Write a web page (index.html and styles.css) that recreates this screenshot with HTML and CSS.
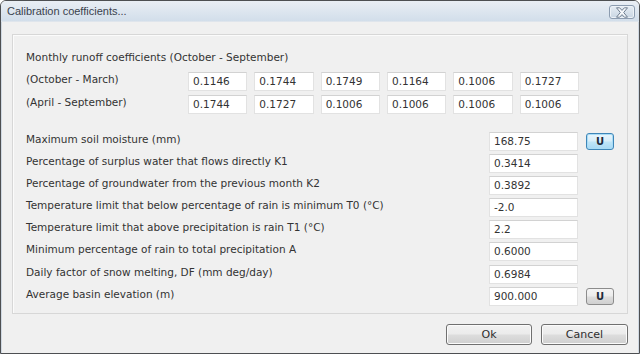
FILE: index.html
```html
<!DOCTYPE html>
<html>
<head>
<meta charset="utf-8">
<link rel="stylesheet" href="styles.css">
</head>
<body>
<div class="window">
  <div class="titlebar">
    <span class="title">Calibration coefficients...</span>
    <span class="close">
      <svg width="16" height="11" viewBox="0 0 16 11">
        <path d="M2.5 0.8 L5.6 0.8 L8 3.4 L10.4 0.8 L13.5 0.8 L9.7 5.5 L13.5 10.2 L10.4 10.2 L8 7.6 L5.6 10.2 L2.5 10.2 L6.3 5.5 Z" fill="#f6f8fb" stroke="#6f7e90" stroke-width="1" stroke-linejoin="round"/>
      </svg>
    </span>
  </div>
  <div class="content">
    <div class="group">
      <div class="heading">Monthly runoff coefficients (October - September)</div>
      <div class="monthly">
        <span class="label">(October - March)</span>
        <span class="field">0.1146</span>
        <span class="field">0.1744</span>
        <span class="field">0.1749</span>
        <span class="field">0.1164</span>
        <span class="field">0.1006</span>
        <span class="field">0.1727</span>
        <span class="label">(April - September)</span>
        <span class="field">0.1744</span>
        <span class="field">0.1727</span>
        <span class="field">0.1006</span>
        <span class="field">0.1006</span>
        <span class="field">0.1006</span>
        <span class="field">0.1006</span>
      </div>
      <div class="params">
        <span class="label">Maximum soil moisture (mm)</span>
        <span class="field">168.75</span>
        <span class="ubtn focused">U</span>
        <span class="label">Percentage of surplus water that flows directly K1</span>
        <span class="field">0.3414</span>
        <span></span>
        <span class="label">Percentage of groundwater from the previous month K2</span>
        <span class="field">0.3892</span>
        <span></span>
        <span class="label">Temperature limit that below percentage of rain is minimum T0 (°C)</span>
        <span class="field">-2.0</span>
        <span></span>
        <span class="label">Temperature limit that above precipitation is rain T1 (°C)</span>
        <span class="field">2.2</span>
        <span></span>
        <span class="label">Minimum percentage of rain to total precipitation A</span>
        <span class="field">0.6000</span>
        <span></span>
        <span class="label">Daily factor of snow melting, DF (mm deg/day)</span>
        <span class="field">0.6984</span>
        <span></span>
        <span class="label">Average basin elevation (m)</span>
        <span class="field">900.000</span>
        <span class="ubtn">U</span>
      </div>
    </div>
    <div class="actions">
      <span class="btn">Ok</span>
      <span class="btn">Cancel</span>
    </div>
  </div>
</div>
</body>
</html>
```
FILE: styles.css
```css
* { box-sizing: border-box; }
html, body {
  margin: 0;
  padding: 0;
  width: 640px;
  height: 354px;
  overflow: hidden;
  background: #ffffff;
}
body {
  font-family: "DejaVu Sans", Verdana, sans-serif;
  font-size: 10.5px;
  color: #333333;
}
.window {
  width: 640px;
  height: 354px;
  border: 1px solid #4d4f52;
  border-radius: 6px 6px 0 0;
  background: #f0f0f0;
  display: flex;
  flex-direction: column;
  overflow: hidden;
}
.titlebar {
  height: 21px;
  flex: none;
  display: flex;
  align-items: flex-start;
  justify-content: space-between;
  padding: 0 4px 0 6px;
  background: linear-gradient(#e9eef4, #d2deea);
  border-bottom: 1px solid #dfe5ec;
}
.title {
  font-family: "Liberation Sans", Arial, sans-serif;
  font-size: 11px;
  line-height: 21px;
  color: #3a424d;
}
.close {
  width: 26px;
  height: 14px;
  margin-top: 4px;
  border: 1px solid #8c9cb0;
  border-radius: 3px;
  background: linear-gradient(#e6edf4, #c9d6e3);
  box-shadow: inset 0 0 0 1px #edf2f7;
  display: flex;
  align-items: center;
  justify-content: center;
}
.content {
  flex: 1;
  display: flex;
  flex-direction: column;
  padding: 12px 10px 0 10px;
  border-left: 1px solid #cfd8e2;
  border-right: 1px solid #cfd8e2;
}
.group {
  height: 280px;
  border: 1px solid #d7d7d7;
  box-shadow: inset 1px 1px 0 #fbfbfb;
  padding: 13px 13px 0 13px;
  display: flex;
  flex-direction: column;
}
.heading {
  height: 19px;
  line-height: 19px;
}
.monthly {
  margin-top: 5px;
  width: 553px;
  display: grid;
  grid-template-columns: 155px repeat(6, 1fr);
  grid-auto-rows: 19px;
  column-gap: 7px;
  row-gap: 4px;
}
.label {
  line-height: 14px;
  white-space: nowrap;
}
.field {
  background: #ffffff;
  border: 1px solid #e2e2e2;
  border-top-color: #d2d2d2;
  padding-left: 4px;
  line-height: 17px;
  color: #333;
}
.params {
  margin-top: 18px;
  display: grid;
  grid-template-columns: 1fr 89px 28px;
  grid-auto-rows: 19px;
  column-gap: 8px;
  row-gap: 3.1px;
}
.ubtn {
  height: 17px;
  margin-top: 1px;
  border: 1px solid #8c8c8c;
  border-radius: 3px;
  background: linear-gradient(#f4f4f4 0%, #ececec 45%, #dcdcdc 55%, #d0d0d0 100%);
  font-weight: bold;
  font-size: 10px;
  color: #1f2a3a;
  text-align: center;
  line-height: 15px;
}
.ubtn.focused {
  border-color: #3e86b8;
  box-shadow: inset 0 0 0 1px #a9dcf6;
  background: linear-gradient(#e9f5fc 0%, #d8eefa 45%, #bee5f8 55%, #a7d9f5 100%);
}
.actions {
  margin-top: 10px;
  display: flex;
  justify-content: flex-end;
  gap: 9px;
}
.btn {
  height: 21px;
  border: 1px solid #707070;
  border-radius: 3px;
  box-shadow: inset 0 0 0 1px #fbfbfb;
  background: linear-gradient(#f2f2f2 0%, #ebebeb 48%, #dddddd 52%, #cfcfcf 100%);
  text-align: center;
  line-height: 19px;
  font-size: 11px;
  color: #2e2e2e;
}
.btn:first-child { width: 86px; }
.btn:last-child { width: 87px; }
```
